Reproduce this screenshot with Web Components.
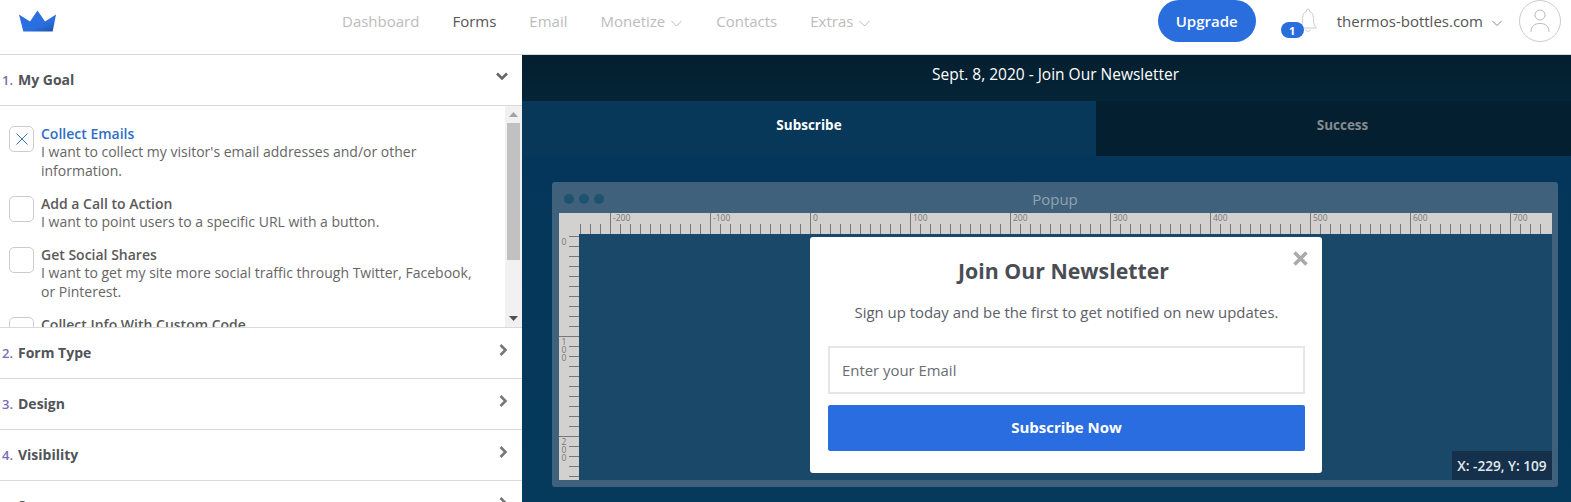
<!DOCTYPE html>
<html><head><meta charset="utf-8">
<style>
html,body{margin:0;padding:0;width:1571px;height:502px;overflow:hidden;background:#fff;font-family:"Open Sans",sans-serif}
app-shell{width:1571px;height:502px}
</style></head><body>
<app-shell>
  <app-header slot="header"></app-header>
  <side-panel slot="side">
    <acc-head n="1." open>My Goal</acc-head>
    <goal-list>
      <goal-item heading="Collect Emails" selected>I want to collect my visitor's email addresses and/or other information.</goal-item>
      <goal-item heading="Add a Call to Action">I want to point users to a specific URL with a button.</goal-item>
      <goal-item heading="Get Social Shares">I want to get my site more social traffic through Twitter, Facebook, or Pinterest.</goal-item>
      <goal-item heading="Collect Info With Custom Code"></goal-item>
    </goal-list>
    <acc-head n="2.">Form Type</acc-head>
    <acc-head n="3.">Design</acc-head>
    <acc-head n="4.">Visibility</acc-head>
    <acc-head n="5.">Success</acc-head>
  </side-panel>
  <editor-stage slot="main"></editor-stage>
</app-shell>
<script>
function def(name, css, html, init){
  customElements.define(name, class extends HTMLElement{
    constructor(){super();const r=this.attachShadow({mode:'open'});
      r.innerHTML='<style>'+css+'</style>'+(typeof html==='function'?html(this):html);}
    connectedCallback(){ if(init) init.call(this,this.shadowRoot); }
  });
}
def('app-shell',`:host{display:grid;grid-template-columns:522px 1fr;grid-template-rows:55px 1fr;overflow:hidden}
 ::slotted([slot=header]){grid-column:1/3}`,
 `<slot name="header"></slot><slot name="side"></slot><slot name="main"></slot>`);

const chev=`<svg width="10" height="7" viewBox="0 0 10 7" fill="none" stroke="#888" stroke-width="1"><path d="M.5 1l4.5 4.5L9.500 1"/></svg>`;
const navChev=`<svg slot="i" style="margin-top:6px" width="12" height="7" viewBox="0 0 12 7" fill="none" stroke="#bbb"><path d="M.5 1l5 5 5-5"/></svg>`;
def('nav-item',`:host{display:inline-flex;align-items:center;gap:6px;font-size:15px;color:#bcbcbc;white-space:nowrap}
 :host([active]){color:#555}`,
 `<slot></slot><slot name="i"></slot>`);
def('app-header',`:host{display:flex;align-items:center;height:55px;box-sizing:border-box;border-bottom:1px solid #d9d9d9;padding:0 10px 12px 19px;background:#fff}
 .crown{display:block;flex:none}
 nav{display:flex;gap:33px;margin-left:285px;margin-bottom:1px;flex:none}
 .grow{flex:1}
 .up{width:98px;height:42px;box-sizing:border-box;padding-bottom:1px;border-radius:21px;background:#2a6ede;color:#fff;font-size:15px;font-weight:600;display:flex;align-items:center;justify-content:center;flex:none}
 .bell{position:relative;width:18px;height:26px;margin-left:43px;flex:none}
 .badge{position:absolute;left:-18px;top:14px;width:23px;height:16px;border-radius:8px;background:#2a6ede;color:#fff;font-size:11px;font-weight:700;display:flex;align-items:center;justify-content:center}
 .dom{margin-left:20px;font-size:15px;color:#555;display:flex;align-items:center;gap:9px;flex:none}
 .dom svg{margin-top:5px}
 .av{margin-left:17px;width:40px;height:40px;border:1px solid #ccc;border-radius:50%;display:flex;align-items:center;justify-content:center;flex:none}`,
 `<svg class="crown" width="38" height="22" viewBox="0 0 38 22"><defs><linearGradient id="c" x1=".3" y1=".3" x2=".8" y2="1"><stop offset=".6" stop-color="#2a6ee0"/><stop offset="1" stop-color="#2358b0"/></linearGradient></defs><path d="M0 4.500L11 11.500 18.500 0.500 26 11.500 37 4.500 33.700 21.500H4.300z" fill="url(#c)"/></svg>
 <nav>
  <nav-item>Dashboard</nav-item><nav-item active>Forms</nav-item><nav-item>Email</nav-item>
  <nav-item>Monetize ${navChev}</nav-item>
  <nav-item>Contacts</nav-item>
  <nav-item>Extras ${navChev}</nav-item>
 </nav>
 <div class="grow"></div>
 <div class="up">Upgrade</div>
 <div class="bell"><svg width="18" height="26" viewBox="0 0 18 26" fill="none" stroke="#ccc"><path d="M9 1a2 2 0 0 1 1.500 2.500C14 4.500 14.500 8 14.500 12c0 4 1 6 3 8H.5c2-2 3-4 3-8 0-4 .5-7.500 4-8.500A2 2 0 0 1 9 1zM6.500 21.500a2.600 2.600 0 0 0 5 0"/></svg><div class="badge">1</div></div>
 <div class="dom"><span>thermos-bottles.com</span>${chev}</div>
 <div class="av"><svg width="20" height="26" viewBox="0 0 20 26" fill="none" stroke="#bbb"><circle cx="10" cy="7" r="5"/><path d="M1 24c0-6 3.500-8.500 9-8.500s9 2.500 9 8.500"/></svg></div>`);

def('side-panel',`:host{display:flex;flex-direction:column;height:447px;overflow:hidden;background:#fff}`,`<slot></slot>`);
def('acc-head',`:host{display:flex;flex:none;align-items:center;height:48px;padding:0 14px 2px 2px;border-bottom:1px solid #d9d9d9;color:#50545a;font-size:14px;font-weight:700;background:#fff}
 .n{color:#7b6cb6;font-size:13px;font-weight:600;width:16px;padding-top:1px}
 .t{flex:1}
 svg{margin-top:-5px}`,
 h=>`<span class="n">${h.getAttribute('n')}</span><span class="t"><slot></slot></span>`+
 (h.hasAttribute('open')
  ?`<svg width="12" height="9" viewBox="0 0 12 9" fill="none" stroke="#666" stroke-width="2.600"><path d="M1 1.500l5 5 5-5"/></svg>`
  :`<svg width="9" height="12" viewBox="0 0 9 12" fill="none" stroke="#777" stroke-width="2.600"><path d="M1.500 1l5 5-5 5"/></svg>`));
def('goal-list',`:host{display:flex;height:221px;flex:none;overflow:hidden;border-bottom:1px solid #d9d9d9}
 .c{flex:1;min-width:0;padding:19px 30px 0 9px;display:flex;flex-direction:column;gap:15px}
 .sb{width:17px;background:#f1f1f1;display:flex;flex-direction:column;align-items:center;flex:none}
 .a{height:17px;display:flex;align-items:center;justify-content:center;flex:none}
 .th{width:13px;height:137px;background:#c1c1c1;flex:none}
 .tr{flex:1}`,
 `<div class="c"><slot></slot></div><div class="sb"><div class="a"><svg width="9" height="5"><path d="M0 5L4.500 0 9 5z" fill="#a3a3a3"/></svg></div><div class="th"></div><div class="tr"></div><div class="a"><svg width="9" height="5"><path d="M0 0L4.500 5 9 0z" fill="#505050"/></svg></div></div>`);
def('goal-item',`:host{display:flex;gap:7px;font-size:14px;line-height:19px;color:#666;flex:none}
 .b{width:23px;height:24px;border:1px solid #ccc;border-radius:5px;flex:none;margin-top:1px;display:flex;align-items:center;justify-content:center}
 .h{color:#5a5a5a;font-weight:600;line-height:17px}
 :host([selected]) .h{color:#2f6fc9}`,
 h=>`<div class="b">${h.hasAttribute('selected')?'<svg width="12" height="12" viewBox="0 0 12 12" stroke="#3f6fb5" fill="none"><path d="M.5.5l11 11M11.500.5l-11 11"/></svg>':''}</div><div><div class="h">${h.getAttribute('heading')}</div><div><slot></slot></div></div>`);

def('h-ruler',`:host{display:block;height:21px;background:#d3d1d0;overflow:hidden;font-size:8.500px;color:#777}
 .in{margin-left:21px;width:961px;height:21px;display:flex;overflow:hidden;
  background:linear-gradient(to right,#777 1px,transparent 1px) 0 100%/10px 10px repeat-x}
 .s{width:30px;flex:none}
 .m{width:100px;flex:none;box-sizing:border-box;border-left:1px solid #777;padding-left:2px;line-height:10px;height:21px}`,
 `<div class="in"><div class="s"></div>`+[-200,-100,0,100,200,300,400,500,600,700].map(v=>`<div class="m">${v}</div>`).join('')+`</div>`);
def('v-ruler',`:host{display:block;width:20px;background:#d3d1d0;overflow:hidden;font-size:8.500px;color:#777}
 .in{margin-top:2px;height:244px;display:flex;flex-direction:column;overflow:hidden;
  background:linear-gradient(to bottom,#777 1px,transparent 1px) 100% 0/10px 10px repeat-y}
 .m{height:100px;flex:none;box-sizing:border-box;border-top:1px solid #777;padding:1px 0 0 2px;line-height:8px}
 .m:first-child{border-image:linear-gradient(to right,transparent 50%,#777 50%) 1}
 .m span{display:block;width:6px;word-break:break-all;text-align:center}`,
 `<div class="in">`+['0','100','200'].map(v=>`<div class="m"><span>${v}</span></div>`).join('')+`</div>`);

def('popup-card',`:host{position:absolute;left:231px;top:3px;width:512px;height:236px;background:#fff;border-radius:3px;box-sizing:border-box;padding:19px 17px 0 18px;display:flex;flex-direction:column;align-items:stretch;color:#4a4e54}
 h2{margin:0;padding-right:6px;font-size:21.300px;line-height:30px;font-weight:700;text-align:center;color:#4a4e54;height:30px}
 p{margin:16px 0 0;font-size:14.900px;line-height:20px;text-align:center;color:#5c6066}
 .i{margin-top:24px;height:48px;box-sizing:border-box;border:2px solid #e6e6e6;padding:0 12px;font-size:14.900px;color:#6a6d72;display:flex;align-items:center}
 .b{margin-top:11px;height:46px;box-sizing:border-box;padding-bottom:2px;background:#2a6de0;border-radius:2px;color:#fff;font-weight:700;font-size:15px;display:flex;align-items:center;justify-content:center}
 .x{position:absolute;right:14px;top:14px}`,
 `<h2>Join Our Newsletter</h2><p>Sign up today and be the first to get notified on new updates.</p><div class="i">Enter your Email</div><div class="b">Subscribe Now</div>
 <svg class="x" width="15" height="15" viewBox="0 0 15 15" stroke="#aaa" stroke-width="3.600"><path d="M1.500 1.500l12 12M13.500 1.500l-12 12"/></svg>`);

def('editor-frame',`:host{display:grid;grid-template-columns:20px 1fr;grid-template-rows:31px 21px 1fr;width:1006px;height:305px;box-sizing:border-box;background:#3f617b;border-radius:3px;padding:0 6px 7px 7px;margin:26px 0 0 30px}
 .bar{grid-column:1/3;display:flex;align-items:center;position:relative;margin-left:-7px;padding-left:12px;gap:5px;padding-top:2px;box-sizing:border-box;height:31px}
 .d{width:10px;height:10px;border-radius:50%;background:#1f5271;flex:none}
 .t{position:absolute;left:0;right:-6px;text-align:center;color:#8fa3b3;font-size:15px}
 h-ruler{grid-column:1/3}
 .cv{background:#1a4868;position:relative;overflow:hidden}
 .co{position:absolute;right:0;bottom:0;width:100px;height:29px;background:#14304a;color:#e4e8ec;font-size:13.600px;font-weight:600;display:flex;align-items:center;justify-content:center;white-space:nowrap}`,
 `<div class="bar"><span class="d"></span><span class="d"></span><span class="d"></span><span class="t">Popup</span></div>
 <h-ruler></h-ruler><v-ruler></v-ruler>
 <div class="cv"><popup-card></popup-card><div class="co">X: -229, Y: 109</div></div>`);

def('editor-stage',`:host{display:flex;flex-direction:column;height:447px;background:linear-gradient(#04345a,#053a5c);overflow:hidden}
 .tb{height:46px;background:linear-gradient(#041f2f,#042437);color:#fff;font-size:15.500px;display:flex;align-items:center;justify-content:center;flex:none;padding-left:18px;padding-bottom:9px;box-sizing:border-box}
 .tabs{display:grid;grid-template-columns:574px 1fr;height:55px;flex:none}
 .tab{display:flex;align-items:center;justify-content:center;font-size:13.500px;font-weight:700;padding-bottom:8px;box-sizing:border-box}
 .on{background:#083859;color:#fff}.off{background:#041f2f;color:#858b8f;padding-left:18px}`,
 `<div class="tb">Sept. 8, 2020 - Join Our Newsletter</div>
 <div class="tabs"><div class="tab on">Subscribe</div><div class="tab off">Success</div></div>
 <editor-frame></editor-frame>`);
</script>
</body></html>
